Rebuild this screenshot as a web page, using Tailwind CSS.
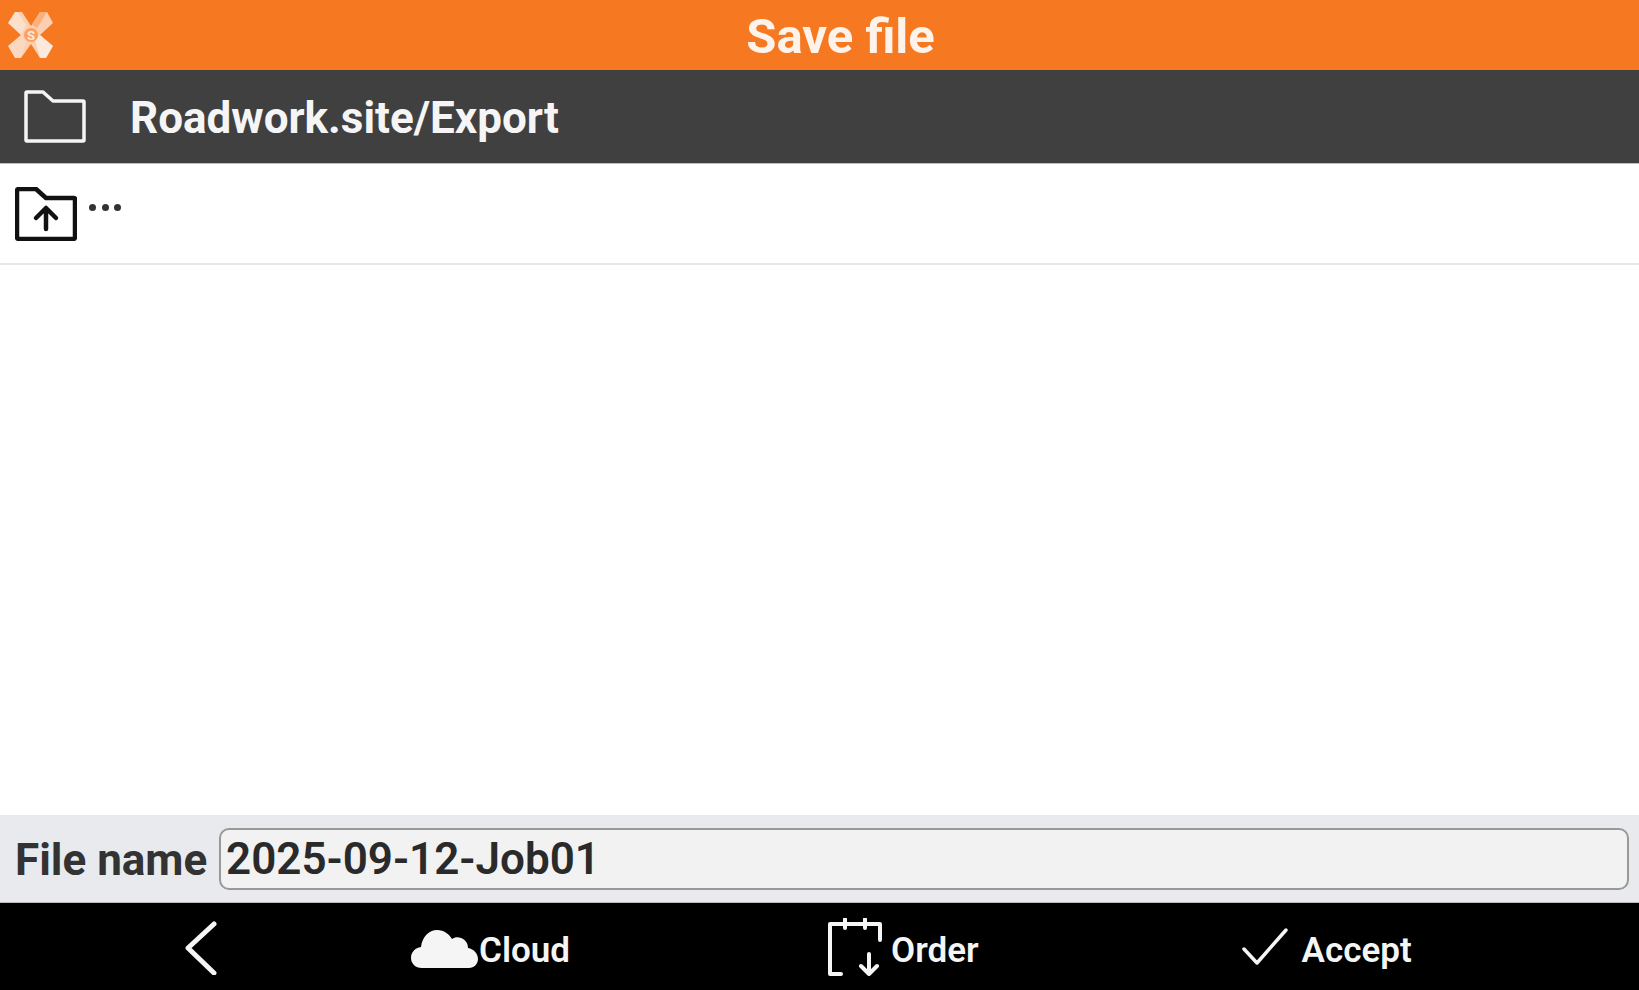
<!DOCTYPE html>
<html lang="en">
  <head>
    <meta charset="UTF-8" />
    <meta name="viewport" content="width=device-width, initial-scale=1.0" />
    <title>Save file</title>
    <script src="https://cdn.jsdelivr.net/npm/@tailwindcss/browser@4"></script>
  </head>
  <body class="bg-white font-['Roboto',sans-serif]">
    <div class="flex flex-col w-[1639px] h-[990px] overflow-hidden">
      <!-- Title bar -->
      <div class="relative flex items-center justify-center h-[70px] bg-[#f67820] shrink-0">
        <svg class="absolute left-[8px] top-[11px]" width="46" height="48" viewBox="0 0 46 48">
          <path d="M7 1 L14 1 L23 15 L32 1 L39 1 L45 12 L32 24 L45 35 L38 47 L32 47 L23 33 L13 47 L7 47 L0 35 L13 24 L0 12 Z" fill="#fbcfb0" />
          <path d="M32 1 L39 1 L29 17 L24 14 Z" fill="#fbb07c" />
          <path d="M27 29 L32 24 L45 35 L38 47 L32 47 Z" fill="#fff" fill-opacity="0.55" />
          <path d="M7 1 L10 1 L18 14 L13 24 L0 12 Z" fill="#fff" fill-opacity="0.35" />
          <path d="M13 47 L7 47 L0 35 L13 24 L18 31 Z" fill="#fff" fill-opacity="0.2" />
          <circle cx="23" cy="24" r="7" fill="#f9a066" />
          <text x="23" y="29" text-anchor="middle" font-family="Roboto" font-size="13" font-weight="700" fill="#fde9da">S</text>
        </svg>
        <h1 class="ml-[42px] mt-[2px] text-[49px] leading-none font-bold text-[#fdf3ea]">Save file</h1>
      </div>

      <!-- Current folder -->
      <div class="flex items-center h-[94px] bg-[#404040] border-b border-[#bdbdbd] shrink-0">
        <svg class="ml-[24px]" width="62" height="53" viewBox="0 0 62 53" fill="none" stroke="#f5f5f5" stroke-width="3.5" stroke-linejoin="round">
          <path d="M2 3 Q2 2 3 2 L19 2 L29 11 L59 11 Q60 11 60 12 L60 50 Q60 51 59 51 L3 51 Q2 51 2 50 Z" />
        </svg>
        <span class="ml-[44px] mt-[2px] text-[44px] font-bold text-[#f5f5f5] leading-none">Roadwork.site/Export</span>
      </div>

      <!-- Parent folder row -->
      <div class="flex items-start h-[101px] border-b-2 border-[#e8e8e8] shrink-0 pl-[15px] pt-[23px]">
        <svg width="62" height="54" viewBox="0 0 62 54" fill="none" stroke="#111" stroke-width="4.5" stroke-linejoin="round" stroke-linecap="round">
          <path d="M2 4 Q2 2 4 2 L21 2 L31 11 L59 11 Q60 11 60 12 L60 50 Q60 52 58 52 L4 52 Q2 52 2 50 Z" />
          <path d="M31 42 L31 22 M21 31 L31 21 L41 31" />
        </svg>
        <span class="ml-[12px] flex gap-[5.5px] pt-[17px]">
          <i class="block size-[7px] rounded-full bg-[#333]"></i>
          <i class="block size-[7px] rounded-full bg-[#333]"></i>
          <i class="block size-[7px] rounded-full bg-[#333]"></i>
        </span>
      </div>

      <div class="flex-1"></div>

      <!-- File name -->
      <div class="flex items-center h-[88px] bg-[#e9eaee] border-b border-[#bbb] shrink-0 pl-[15px] pr-[10px]">
        <label class="mt-[2px] text-[44px] font-bold text-[#333] leading-none w-[204px] shrink-0 whitespace-nowrap">File name</label>
        <div class="flex items-center flex-1 h-[62px] px-[5px] bg-[#f2f2f2] border-2 border-[#999] rounded-[10px] text-[44px] font-semibold text-[#2a2a2a] leading-none">2025-09-12-Job01</div>
      </div>

      <!-- Bottom bar -->
      <div class="flex items-center h-[87px] bg-black text-[#f5f5f5] text-[35px] font-semibold shrink-0 pl-[182px]">
        <svg class="mt-[2px]" width="36" height="54" viewBox="0 0 36 54" fill="none" stroke="#f5f5f5" stroke-width="5" stroke-linecap="round" stroke-linejoin="round">
          <path d="M32 3 L6 27 L32 52" />
        </svg>
        <div class="flex items-center ml-[193px]">
          <svg class="mt-[4px]" width="68" height="40" viewBox="0 0 68 40" fill="#f5f5f5">
            <path d="M11 39 C4 39 0 34 0 29 C0 23 4 19 10 18 C11 8 18 1 26 1 C33 1 38 5 41 10 C44 8 47 8 50 9 C55 11 57 15 57 19 C63 20 67 25 67 30 C67 35 63 39 58 39 Z" />
          </svg>
          <span class="mt-[8px] leading-none">Cloud</span>
        </div>
        <div class="flex items-center ml-[258px]">
          <svg class="mt-[1px]" width="54" height="58" viewBox="0 0 54 58" fill="none" stroke="#f5f5f5" stroke-width="4" stroke-linecap="round" stroke-linejoin="round">
            <path d="M13 56 L2 56 L2 6 L52 6 L52 22 M17 1 L17 10 M37 1 L37 10" />
            <path d="M41 36 L41 56 M33 48 L41 56 L49 48" />
          </svg>
          <span class="ml-[9px] mt-[8px] leading-none">Order</span>
        </div>
        <div class="flex items-center ml-[263px]">
          <svg class="mt-[1px]" width="46" height="38" viewBox="0 0 46 38" fill="none" stroke="#f5f5f5" stroke-width="3.5" stroke-linecap="round" stroke-linejoin="round">
            <path d="M2 21 L15 35 L44 2" />
          </svg>
          <span class="ml-[14px] mt-[8px] leading-none">Accept</span>
        </div>
      </div>
    </div>
  </body>
</html>
